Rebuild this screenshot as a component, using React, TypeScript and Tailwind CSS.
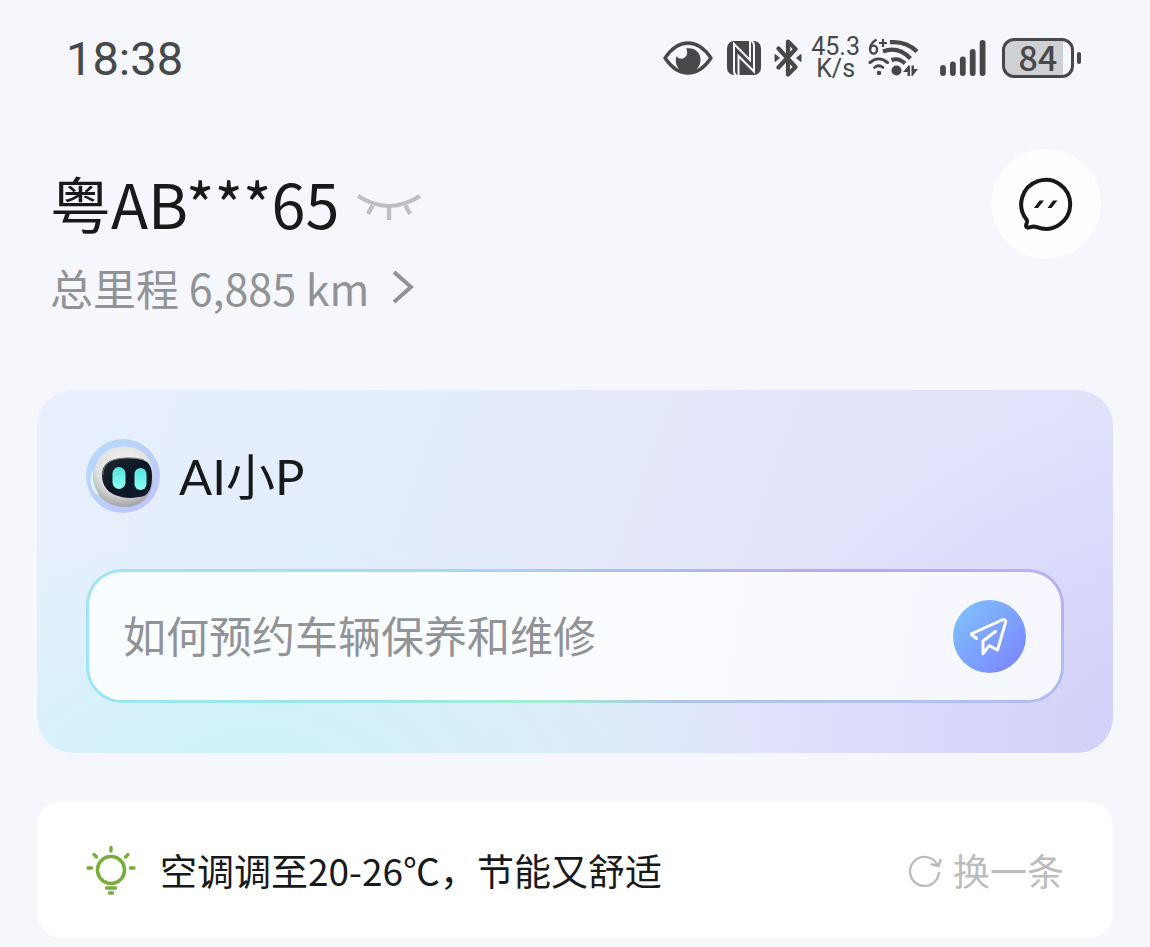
import React, { useState } from "react";

function EyeIcon() {
  return (
    <svg width="50" height="36" viewBox="0 0 50 36" fill="none" aria-hidden="true">
      <path d="M2 18C8 9 16 3 25 3s17 6 23 15c-6 9-14 15-23 15S8 27 2 18Z" stroke="#47484a" strokeWidth="3.400" strokeLinejoin="round" />
      <path d="M23 8.500c8-1.500 14.500 3.500 14.500 11S32 33 25 33s-12-5.500-12.200-12.500c0-2 .4-3.200 1-4.300 1.500 2.600 5 3.300 7.600 1.600 3-2 3.800-6 1.600-9.300Z" fill="#47484a" />
    </svg>
  );
}

function NfcIcon() {
  return (
    <svg width="36" height="36" viewBox="0 0 36 36" fill="none" aria-hidden="true">
      <rect x="1" y="1" width="34" height="34" rx="7" fill="#47484a" />
      <path d="M10.500 36c-1.500-1-2.500-2.500-2.500-5V4L24 20V1" stroke="#f6f7fc" strokeWidth="2" />
      <path d="M12.500 35V16L28 31.500V5.500c0-2-1-3.500-2.500-4.500" stroke="#f6f7fc" strokeWidth="2" />
    </svg>
  );
}

function BluetoothIcon() {
  return (
    <svg width="28" height="38" viewBox="0 0 28 38" fill="none" aria-hidden="true">
      <path d="M4.500 9.500 21.500 28 14 35.500V24M14 14V2.500L21.500 10 4.500 28.500" stroke="#47484a" strokeWidth="4.200" strokeLinejoin="round" strokeLinecap="round" />
      <path d="M1 15.500 5.500 19 1 22.500ZM27 15.500 22.500 19 27 22.500Z" fill="#47484a" stroke="#47484a" strokeLinejoin="round" />
    </svg>
  );
}

function WifiIcon() {
  return (
    <svg width="52" height="40" viewBox="0 0 52 40" fill="none" aria-hidden="true">
      <g stroke="#47484a">
        <path d="M8.500 1.500C4.500 4 2 7.500 2 11.200" strokeWidth="2.400" />
        <ellipse cx="5.600" cy="11.600" rx="3.500" ry="4" strokeWidth="2.400" />
        <path d="M11 5h8M15 1v8" strokeWidth="2.200" />
        <path d="M22 4.200c11-1 20 2.400 27 9.300" strokeWidth="4.200" />
        <path d="M15 13.500c9-3.500 19-1.500 27.500 7" strokeWidth="4.200" />
        <path d="M23.500 22c5-1.800 9.500-.5 13.500 3.500" strokeWidth="4" />
        <path d="M2 24.500c5.500-4.700 12-4.700 17.500 0" strokeWidth="3" strokeLinecap="round" />
        <path d="M6.500 29.500c3-2.400 5.500-2.400 8.500 0" strokeWidth="2.800" strokeLinecap="round" />
      </g>
      <g fill="#47484a">
        <circle cx="11" cy="35" r="2.300" />
        <circle cx="28.500" cy="32.500" r="5" />
        <path d="M35 34l5.500-6.500H42V38h-2.500v-4ZM43.500 27.500H46v3.500h4L44.500 38h-1Z" />
      </g>
    </svg>
  );
}

function SignalIcon() {
  return (
    <svg width="48" height="38" viewBox="0 0 48 38" stroke="#47484a" strokeWidth="5.800" strokeLinecap="round" aria-hidden="true">
      <path d="M4 29v5M13.900 25.500V34M23.800 20.500V34M33.700 13V34M43.600 4V34" />
    </svg>
  );
}

function ClosedEyeIcon() {
  return (
    <svg width="64" height="28" viewBox="0 0 64 28" fill="none" stroke="#bdbfc2" aria-hidden="true">
      <path d="M1 2c20 13.300 42 13.300 62 0" strokeWidth="4" />
      <path d="M15.500 11.500 11 20M32 13v13M48.500 11.500 53 20" strokeWidth="4.400" />
    </svg>
  );
}

function ChatIcon() {
  return (
    <svg width="56" height="56" viewBox="0 0 56 56" fill="none" aria-hidden="true">
      <path d="M8.500 43.500A24.500 24.500 0 1 1 19 51.200c-2-.7-3.500-.8-5-.4l-3.500.8c-1.600.3-2.700-.8-2.400-2.400l.8-3c.2-1 .1-1.800-.4-2.700Z" stroke="#18191b" strokeWidth="4" strokeLinejoin="round" />
      <path d="M16 32 21.500 24.500h4.500L20 32ZM29.500 32 35 24.500H39.500L33.500 32Z" fill="#18191b" />
    </svg>
  );
}

function RobotAvatar() {
  return (
    <svg width="74" height="74" viewBox="0 0 74 74" aria-hidden="true">
      <defs>
        <linearGradient id="halo" x1="0" y1="0" x2="1" y2="1">
          <stop stopColor="#b5dcfb" />
          <stop offset="1" stopColor="#bfc3fb" />
        </linearGradient>
        <radialGradient id="shell" cx=".48" cy=".3" r=".72">
          <stop stopColor="#f4f2f2" />
          <stop offset=".65" stopColor="#dedfe0" />
          <stop offset="1" stopColor="#a09c9d" />
        </radialGradient>
        <linearGradient id="lamp" x1="0" y1="0" x2="0" y2="1">
          <stop stopColor="#55e4df" />
          <stop offset="1" stopColor="#8ffff0" />
        </linearGradient>
        <linearGradient id="visor" x1="0" y1="0" x2="1" y2="1">
          <stop stopColor="#25282e" />
          <stop offset=".5" stopColor="#0a1626" />
          <stop offset="1" stopColor="#101c30" />
        </linearGradient>
      </defs>
      <circle cx="37" cy="37" r="37" fill="url(#halo)" />
      <ellipse cx="10" cy="44" rx="5" ry="12" fill="#eef2f4" transform="rotate(-12 10 44)" />
      <path d="M8 38C8 19 20 7.500 38 7.500c18 0 29.500 12 29.500 29.500 0 19-12 31-28 31C21 68 8 57 8 38Z" fill="url(#shell)" />
      <path d="M8 32c-1.500 7 .5 16 5 23" fill="none" stroke="#8fe0dc" strokeWidth="1.300" />
      <path d="M16 36c0-9 5-14 14-16 10-2 20-1 27 1 6 2 9 7 9 16 0 10-2 17-8 20-7 2-18 3-26 0-10-3-16-10-16-21Z" fill="url(#visor)" />
      <path d="M17 36c0-9 5-14 14-16 10-2 20-1 27 1" fill="none" stroke="#777a7d" strokeWidth="1" />
      <rect x="26.500" y="28" width="13" height="22" rx="6.500" fill="url(#lamp)" />
      <rect x="48.500" y="29" width="12" height="22" rx="6" fill="url(#lamp)" />
    </svg>
  );
}

function SendIcon() {
  return (
    <svg width="40" height="40" viewBox="3 -1 40 40" fill="none" stroke="white" strokeWidth="3" strokeLinejoin="round" strokeLinecap="round" aria-hidden="true">
      <path d="M9.500 21.500 4 17 35 3c2.500-1 4 .2 3.500 2.700L30.500 33l-8.300-4.300-6.200 8V24L28.500 14.500" />
    </svg>
  );
}

function BulbIcon() {
  return (
    <svg width="50" height="50" viewBox="0 0 50 50" fill="none" stroke="#77ad38" strokeWidth="3.400" strokeLinecap="round" aria-hidden="true">
      <circle cx="25" cy="25" r="13.500" strokeWidth="3.600" />
      <path d="M25 2.500v3.500M8 9.500l2.500 2.500M42 9.500 39.500 12M2 23h3.500M44.500 23H48M20.500 43h9M23.500 48h3" />
    </svg>
  );
}

function RefreshIcon() {
  return (
    <svg width="34" height="34" viewBox="0 0 34 34" fill="none" stroke="#bbbcbe" strokeWidth="2.400" aria-hidden="true">
      <path d="M30 19A14.500 14.500 0 1 1 28.500 12" />
      <path d="M21.500 11l8 2L32 6" />
    </svg>
  );
}

function StatusBar() {
  return (
    <div className="flex items-center justify-between pt-[30px] pr-[32px] pl-[29px] text-[#47484a]">
      <time className="pt-[2px] font-[Roboto,sans-serif] text-[47px] leading-[54px]">18:38</time>
      <div className="flex items-center">
        <EyeIcon />
        <div className="ml-[13px]"><NfcIcon /></div>
        <div className="ml-[12px]"><BluetoothIcon /></div>
        <div className="ml-[9px] text-center font-[Roboto,sans-serif] text-[25px] leading-[22px]">
          <div>45.3</div>
          <div>K/s</div>
        </div>
        <div className="ml-[8px]"><WifiIcon /></div>
        <div className="ml-[19px]"><SignalIcon /></div>
        <div className="ml-[15px] flex h-[40px] w-[72px] items-center justify-center rounded-[12px] border-[3px] border-[#47484a] bg-[linear-gradient(90deg,#cfd0d3_88%,#f6f7fc_88%)] pb-[2px] text-[34px] leading-[34px] font-medium">
          84
        </div>
        <div className="ml-[3px] h-[12px] w-[4px] rounded-[2px] bg-[#47484a]" />
      </div>
    </div>
  );
}

function VehicleHeader() {
  return (
    <header className="mt-[63px] flex items-start justify-between pr-[12px] pl-[13px]">
      <div className="pt-[18px]">
        <div className="flex items-center gap-[18px]">
          <h1 className="text-[61px] leading-[72px] text-[#18191b]">粤AB***65</h1>
          <button type="button" aria-label="显示车牌" className="pt-[10px]"><ClosedEyeIcon /></button>
        </div>
        <a href="#mileage" className="mt-[24px] flex items-center gap-[23px] text-[43px] leading-[48px] text-[#929396]">
          总里程 6,885 km
          <svg width="22" height="34" viewBox="0 0 22 34" fill="none" stroke="#929396" strokeWidth="4" aria-hidden="true">
            <path d="M2 2l17 15L2 32" />
          </svg>
        </a>
      </div>
      <button type="button" aria-label="消息" className="flex size-[110px] items-center justify-center rounded-full bg-[#fefefe]">
        <ChatIcon />
      </button>
    </header>
  );
}

function AssistantCard() {
  const [question, setQuestion] = useState("");
  return (
    <section className="mt-[79px] rounded-[36px] bg-[radial-gradient(ellipse_50%_65%_at_20%_105%,#cff3fa_0%,#cff3fa00_100%),radial-gradient(ellipse_45%_90%_at_105%_95%,#d3d0fa_0%,#d3d0fa00_100%),linear-gradient(110deg,#e9f0fd_0%,#e2edfd_30%,#e5e8fb_55%,#dedffc_100%)] px-[49px] pt-[49px] pb-[50px]">
      <div className="flex items-center gap-[19px]">
        <RobotAvatar />
        <h2 className="font-[Lato,'Noto_Sans_CJK_SC',sans-serif] text-[49px] leading-[64px] text-[#18191b]">AI小P</h2>
      </div>
      <div className="mt-[56px] rounded-[36px] bg-[linear-gradient(90deg,#9fe3f4_0%,#a4dcf3_35%,#aebcf0_58%,#b9a6ea_78%,#bdb0f2_100%),linear-gradient(90deg,#9be6f1_0%,#9ce5e8_30%,#a2f0cf_46%,#adc6e6_60%,#b3bcf0_100%)] bg-[length:100%_50%] bg-[position:top,bottom] bg-no-repeat p-[3px]">
        <form className="flex h-[128px] items-center rounded-[33px] bg-[linear-gradient(100deg,#f8fdff_0%,#fafcff_50%,#f6f6ff_100%)] pr-[35px] pl-[34px]" onSubmit={(e) => e.preventDefault()}>
          <input
            type="text"
            aria-label="向AI小P提问"
            placeholder="如何预约车辆保养和维修"
            value={question}
            onChange={(e) => setQuestion(e.target.value)}
            className="h-[64px] min-w-0 flex-1 bg-transparent pb-[4px] text-[43px] text-[#18191b] outline-none placeholder:text-[#929396]"
          />
          <button type="submit" aria-label="发送" className="flex size-[73px] items-center justify-center rounded-full bg-linear-to-br from-[#7fc4fb] to-[#7b80ff]">
            <SendIcon />
          </button>
        </form>
      </div>
    </section>
  );
}

function TipCard() {
  return (
    <section className="mt-[49px] flex h-[136px] items-center rounded-[24px] bg-white pr-[49px] pl-[49px]">
      <BulbIcon />
      <p className="ml-[24px] flex-1 text-[37px] leading-[48px] text-[#18191b]">空调调至20-26℃，节能又舒适</p>
      <button type="button" className="flex items-center gap-[10px] text-[37px] leading-[48px] text-[#bbbcbe]">
        <RefreshIcon />
        换一条
      </button>
    </section>
  );
}

export default function App() {
  return (
    <main lang="zh-CN" className="min-h-screen bg-[#f6f7fc] px-[37px] pb-[9px] font-['Noto_Sans_CJK_SC',sans-serif]">
      <StatusBar />
      <VehicleHeader />
      <AssistantCard />
      <TipCard />
    </main>
  );
}
